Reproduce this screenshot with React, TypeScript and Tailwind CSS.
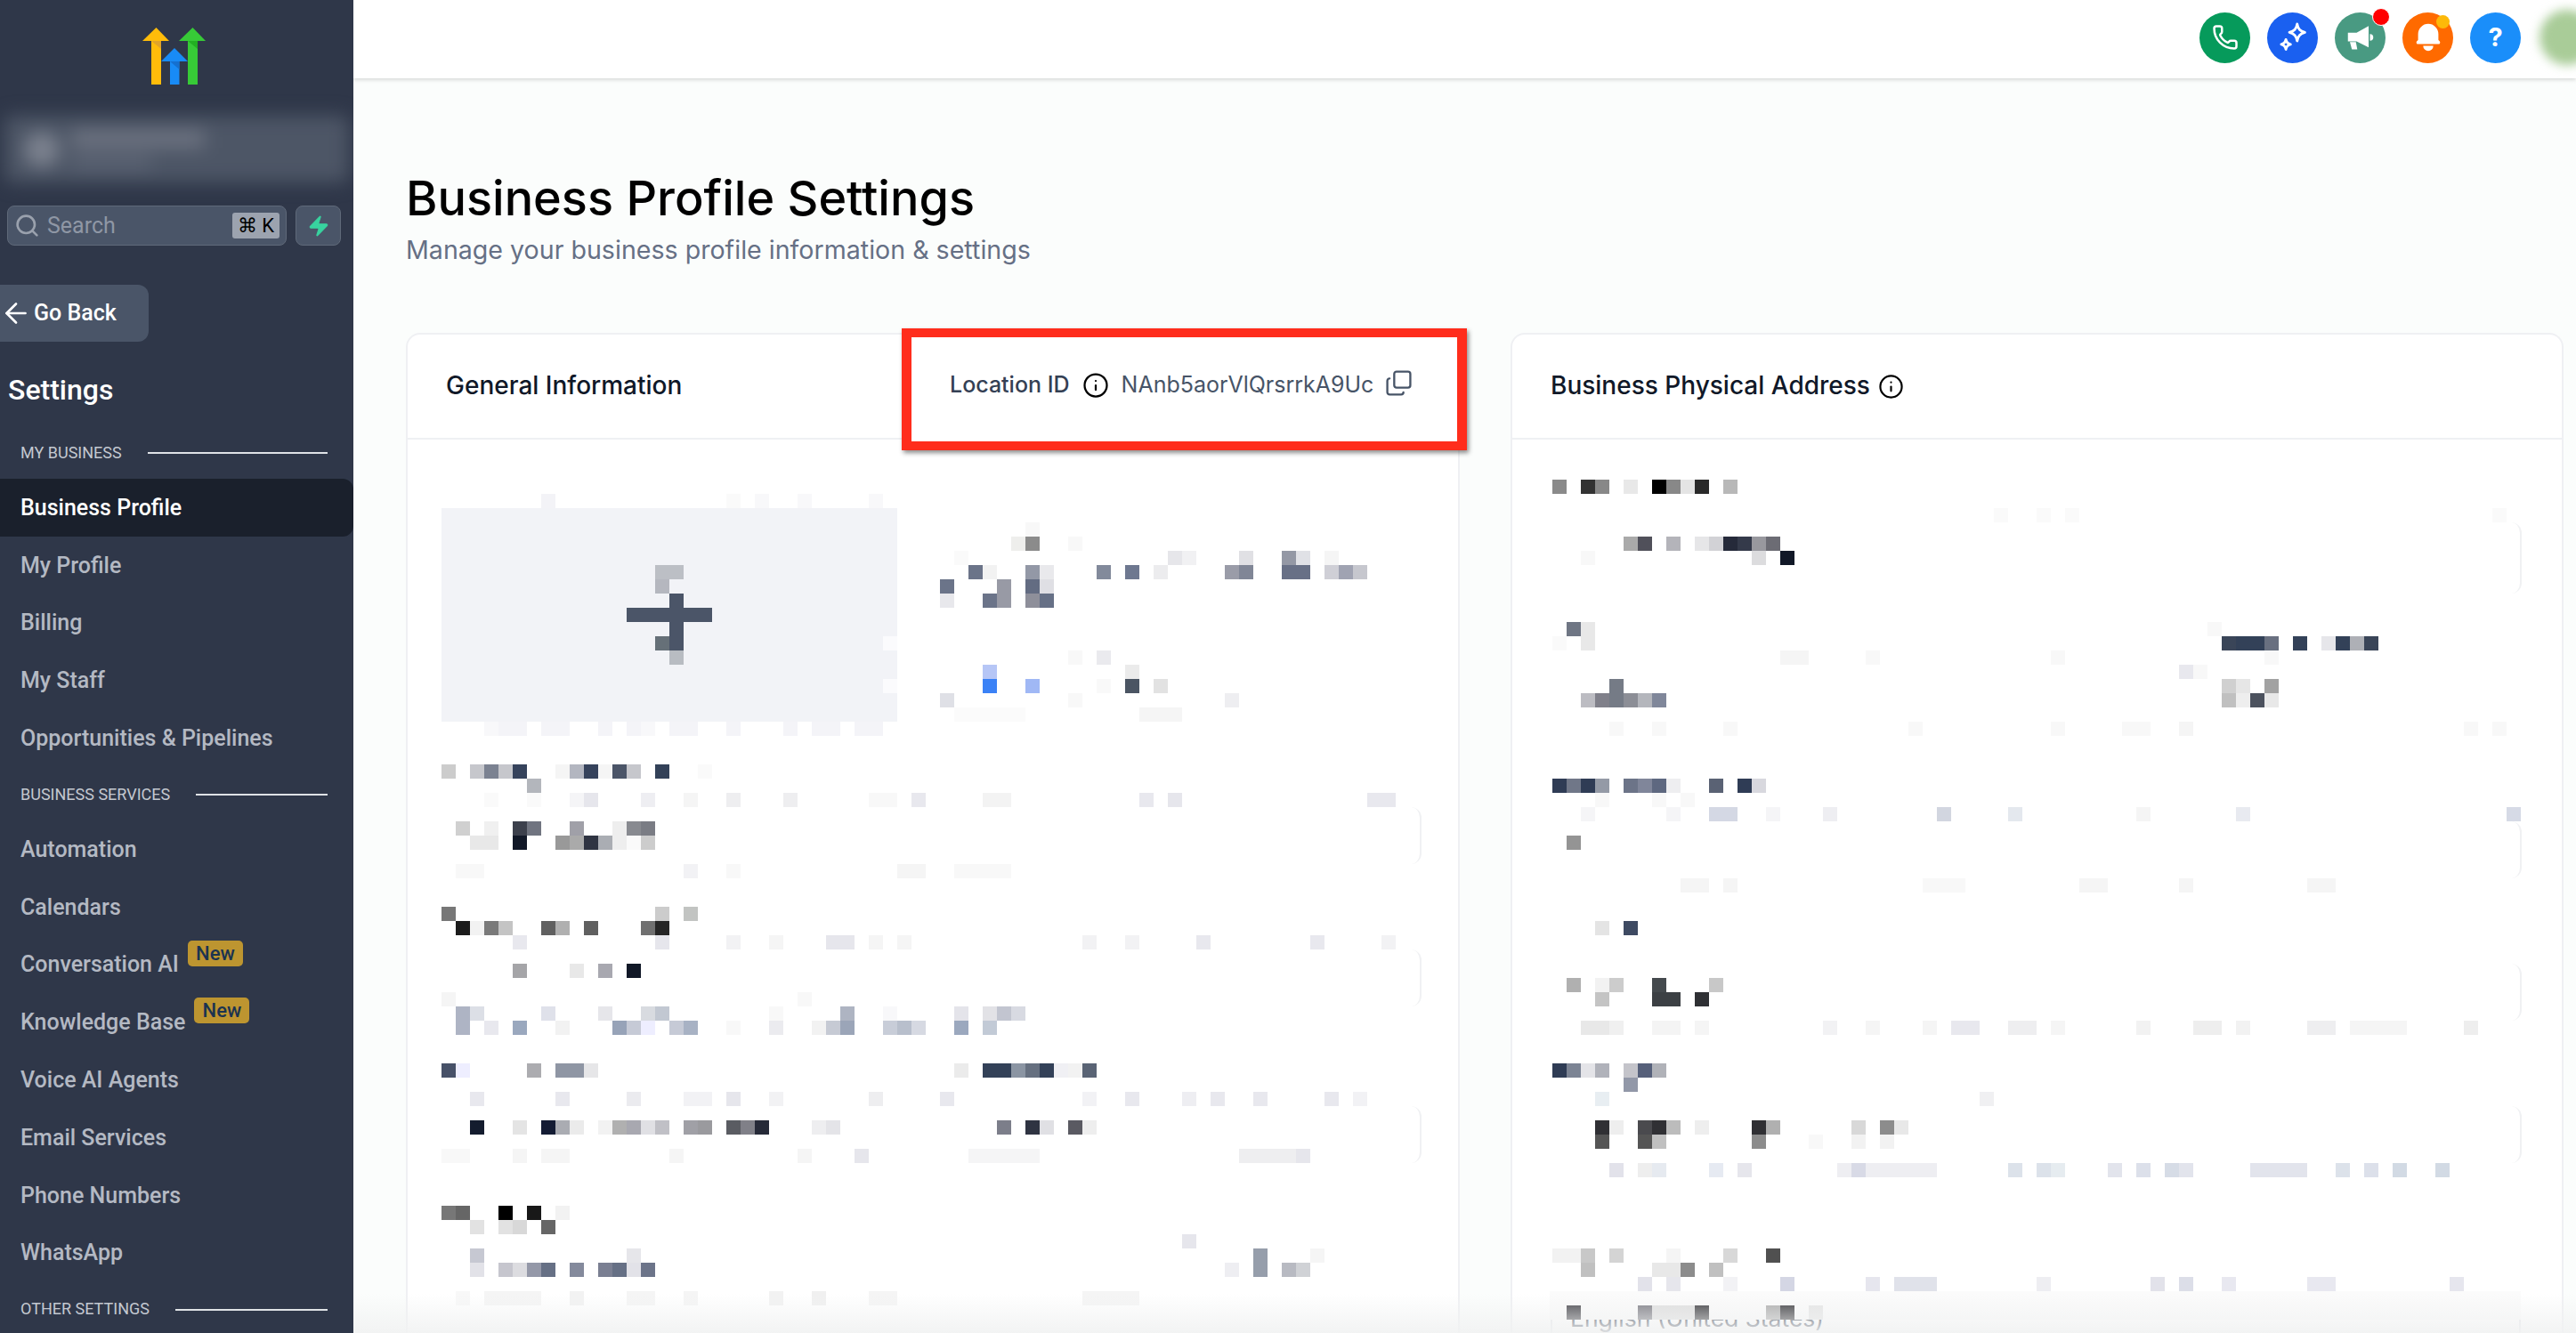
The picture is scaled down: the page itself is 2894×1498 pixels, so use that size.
import { ArrowLeft, Copy, Info, Phone, Search, Zap } from 'lucide-react';
import { HiBell } from 'react-icons/hi';

/* ── Pixelated (redacted) form content: row -> "col:colour" on a 16px grid ── */
const LEFT_CELLS: Record<number, string> = {
  3: '7:f3f3f7 20:fafafa 22:f8f8fa 25:f8f8fa 30:f8f8fa',
  5: '41:f8f8f8',
  6: '40:eeeeec 41:8b8b8b 44:f8f8f8',
  7: '36:fafafa 51:e6e6ea 52:f1f1f3 56:e0e0e4 59:9498a5 60:e0e1e6 62:f5f5f5',
  8: '15:bcbfc5 16:bcbfc5 37:6b7489 38:f2f2f2 41:9398a6 42:e9e9ec 46:828a9b 48:6e7890 50:ececee 55:9a9ca8 56:808696 59:687086 60:687086 62:cfcfd6 63:a0a3b2 64:c6c7ce',
  9: '15:b5b7bf 35:6b7489 39:989aa5 41:636c82 42:dfdfe4',
  10: '16:4b5568 35:e8e8ec 38:6b7489 39:989aa5 41:8e8f9a 42:667086',
  11: '13:4b5568 14:4b5568 15:4b5568 16:4b5568 17:4b5568 18:4b5568',
  12: '16:4b5568',
  13: '15:667078 16:4b5568 31:fbfbfd',
  14: '16:b8bcc2 44:f8f8f8 46:eaeaee',
  15: '38:b6c6f6 48:ebebeb',
  16: '31:fbfbfd 38:3b82f6 41:a0b8f5 46:f9f9f9 48:4b5563 50:e2e2e2',
  17: '35:dfe0e6 44:f8f8f8 55:eeeef1',
  18: '36:fbfbfb 37:fbfbfb 38:fbfbfb 39:fbfbfb 40:fbfbfb 49:f5f5f5 50:f5f5f5 51:f5f5f5',
  19: '3:f8f8fa 4:f4f4f8 5:f4f4f8 7:f4f4f8 8:f4f4f8 11:f4f4f8 13:f4f4f8 14:f8f8fa 16:f4f4f8 17:f4f4f8 20:f4f4f8 24:f4f4f8 26:f4f4f8 27:f4f4f8 29:f4f4f8 30:f4f4f8',
  22: '0:cccccc 2:c6c7cc 3:7b8291 4:c6c7cc 5:36435c 8:f5f5f5 9:b3b6c0 10:36435c 11:f5f5f5 12:4b5568 13:c6c7cc 15:334158 18:fafafa',
  23: '6:b3b6bc',
  24: '3:fafafa 6:fafafa 9:f5f5f7 10:e6e6ec 14:eeeef2 17:f5f5f5 20:eeeef0 24:eeeef0 30:f8f8f8 31:f8f8f8 33:e8e8ee 38:f3f3f3 39:f3f3f3 49:e8e8ee 51:e6e6ec 65:e8e8ee 66:e8e8ee',
  26: '1:d0d0d0 3:f0f0f0 5:3c404c 6:707480 9:a0a0a8 12:eeeeee 13:888a90 14:7a7c84',
  27: '2:e8e8e8 3:e8e8e8 5:111827 8:999999 9:aaaaaa 10:2f3442 11:aaadb3 12:eeeeee 13:fafafa 14:cccccc',
  29: '1:f8f8f8 2:f8f8f8 17:f2f2f5 20:f8f8f8 32:f5f5f5 33:f5f5f5 36:f8f8f8 37:f8f8f8 38:f8f8f8 39:f8f8f8',
  32: '0:777777 15:cccccc 17:c2c4c2',
  33: '1:1c1c1c 2:f2f2f2 3:7a7a7a 4:c4c4c4 7:606060 8:b0b0b0 10:606060 14:707070 15:262626',
  34: '5:e8e8ee 15:e6e6ec 20:f2f2f4 23:f5f5f5 27:e6e6ec 28:e6e6ec 30:f5f5f5 32:f5f5f5 45:f2f2f4 48:f2f2f4 53:e8e8ee 61:e8e8ee 66:f2f2f4',
  36: '5:a5a5a8 9:e8e8e8 11:a8a8b0 13:111827',
  38: '0:f5f5f5 25:f8f8f8',
  39: '1:aeb4c4 2:dcdfe6 7:dfe1ea 11:e6e6ea 14:d8dbe0 15:c2c8d2 23:f8f8f8 28:aeb4c2 31:f8f8fa 36:e4e4ea 38:e2e2e6 39:c2c5d0 40:d8dae2',
  40: '1:aeb4c4 3:e8e8ee 5:9aa8be 8:f2f2f2 12:97a3b8 13:c6cad6 14:eeeeff 16:c6cad6 17:a8b2c4 20:f8f8f8 23:ebebef 26:f2f2f2 27:c6cad4 28:9ba5b8 31:c8cdd8 32:b8bfcc 33:d6d9e2 36:9ba8be 38:c2cad6',
  43: '0:475168 1:eeeeff 6:acacb0 8:8f96a4 9:8f96a4 10:e6e6e8 36:ebebeb 38:334158 39:334158 40:8b95a3 41:667080 42:334158 43:f0f0f4 44:f2f2f2 45:5a6475',
  45: '2:e8e8ee 8:e8e8ee 13:ebebef 17:f2f2f5 18:f2f2f5 20:e6e6ec 23:f2f2f4 30:eeeef0 35:e8e8ee 45:f2f2f5 48:e8e8ee 52:eeeef2 54:e8e8ee 57:e8e8ee 62:e8e8ee 64:f2f2f5',
  47: '2:141c2e 5:e4e4e4 7:141c34 8:aaacb2 9:ebebeb 11:f2f2f2 12:b0b0b0 13:a8a8b0 14:e0e0e4 15:c0c0c6 17:a0a0a6 18:9a9a9e 20:5a5c62 21:808088 22:262a38 26:eeeef0 27:e4e4e8 39:7c7e8a 41:2f3442 42:e0e0e4 44:5a5a62 45:eeeeee',
  49: '0:f8f8f8 1:f8f8f8 5:f5f5f5 7:f5f5f5 8:f5f5f5 16:f5f5f5 25:f5f5f5 29:e6e6ec 37:f5f5f6 38:f5f5f6 39:f5f5f6 40:f5f5f6 41:f5f5f6 56:eeeef0 57:eeeef0 58:eeeef0 59:eeeef0 60:e6e6ec',
  53: '0:777777 1:666666 4:000000 6:181818 8:f2f2f2',
  54: '2:e2e2e2 4:e2e2e2 5:d8d8d8 7:666666',
  55: '52:e6e6ec',
  56: '2:c6c8d2 13:e6e6ea 57:969eab 61:f5f5f5',
  57: '2:e2e2e8 4:c6c6ce 5:dcdce0 6:9498a8 7:667085 9:848a9c 11:7a7f92 12:667085 13:e2e2e8 14:6c7489 55:eeeef2 57:969eab 59:b8bac2 60:d0d2d6',
  59: '1:f8f8f8 3:f5f5f5 4:f5f5f5 5:f5f5f5 6:f5f5f5 9:f2f2f2 13:f5f5f5 14:f5f5f5 17:f5f5f5 23:f2f2f2 26:f0f0f0 30:f5f5f5 31:f5f5f5 45:f5f5f5 46:f5f5f5 47:f5f5f5 48:f5f5f5',
};

const RIGHT_CELLS: Record<number, string> = {
  2: '0:8a8a8a 2:333333 3:888888 5:e8e8e8 7:000000 8:888888 9:e4e4e4 10:2a2a2a 12:b8b8b8',
  4: '31:fafafa 34:fafafa 36:fafafa 66:fafafa',
  6: '5:aaaaaa 6:50505a 8:b4b4ba 10:e6e6e8 11:d2d2d6 12:252a3a 13:343a4a 14:98989e 15:6c6c74',
  7: '2:f8f8f8 14:dcdcde 16:111827',
  12: '1:6f7684 2:e8e8e8 46:f8f8f8',
  13: '0:fafafa 2:e8e8e8 47:3a4558 48:334158 49:334158 50:697080 52:334158 54:e6e6ea 55:334158 56:aeb0b6 57:3a4558',
  14: '16:f5f5f5 17:f5f5f5 22:f8f8f8 35:f8f8f8 50:f8f8f8',
  15: '44:e8e8ee 45:f8f8f8',
  16: '4:757b86 47:d0d0d0 48:e6e6e6 50:a2a2a2',
  17: '2:bcbcc2 3:80808a 4:757b86 5:8c8e96 6:b4b6bc 7:80879a 47:c0c0c0 48:eeeeee 49:4c525e 50:e8e8e8',
  19: '4:f8f8f8 7:f8f8f8 12:f8f8f8 25:f8f8f8 35:f8f8f8 40:f8f8f8 41:f8f8f8 44:f5f5f5 64:f8f8f8 66:f8f8f8',
  23: '0:2f3c55 1:707788 2:2f3c55 3:949aa6 5:6c7488 6:80869a 7:5e6880 8:eeeef0 11:5a6274 13:2f3c55 14:d8d8de',
  24: '3:f8f8f8 7:f8f8f8 9:f8f8f8',
  25: '2:f5f5f7 8:f5f5f7 11:d4d8e4 12:d4d8e4 15:f5f5f7 19:eeeef2 27:d2d6e0 32:e4e8ee 41:f5f5f5 48:e8eaf0 67:d6dae6',
  27: '1:949494',
  30: '9:f5f5f5 10:f5f5f5 12:f5f5f5 26:f8f8f8 27:f8f8f8 28:f8f8f8 37:f5f5f5 38:f5f5f5 44:f5f5f5 53:f5f5f5 54:f5f5f5',
  33: '3:e4e4e4 5:3e4a62',
  37: '1:b0b0b0 3:f2f2f2 4:cccccc 7:454a4e 11:c8c8c8',
  38: '3:c4c4c4 7:3c4044 8:3c4044 10:2f3034',
  40: '2:e8e8e8 3:e8e8e8 4:f0f0f0 7:f4f4f4 8:f4f4f4 10:f5f5f5 19:f2f2f4 22:f5f5f5 26:f5f5f5 28:e8e8ee 29:e8e8ee 32:eeeef0 33:eeeef0 35:f5f5f5 41:f2f2f2 45:eeeeee 46:eeeeee 48:f2f2f2 53:eeeef0 54:eeeef0 56:f5f5f5 57:f5f5f5 58:f5f5f5 59:f5f5f5 64:eeeeee',
  43: '0:2f3c55 1:7c8494 2:e4e4e8 3:b0b2ba 5:c4c4ca 6:56607a 7:b0b2b8',
  44: '5:9298a8',
  45: '3:e8eef2 30:f0f0f2',
  47: '3:303034 4:eeeeee 6:4a4a4e 7:303034 8:bcbcbc 10:eeeeee 14:303034 15:b0b0b0 21:d8d8d8 23:8c8c8c 24:e8e8e8',
  48: '3:555555 6:555555 7:c0c0c0 14:8c8c8c 18:f8f8f8 21:f2f2f2 23:f2f2f2',
  50: '4:e2e2ea 6:eeeeee 7:e6eaf0 11:e6eaf2 13:e6e6ec 20:eeeef2 21:d8dae6 22:eeeef2 23:eeeef2 24:eeeef2 25:eeeef2 26:eeeef2 32:dce2ea 34:dce2ea 35:e6ecf0 39:e2e4ec 41:dce0ea 43:d6dce6 44:e2e4ec 49:e2e4ec 50:e2e4ec 51:e2e4ec 52:e2e4ec 55:dce2ea 57:dce0ea 59:d2dae4 62:d2dae4',
  56: '0:f2f2f2 1:f2f2f2 2:c8c8c8 4:d4d4d4 8:f5f5f5 12:d8d8d8 15:505050',
  57: '2:c0c0c0 7:e8e8e8 8:e8e8e8 9:8c8c8c 11:c0c0c0',
  58: '6:e2e2ea 8:e6e6ec 12:f2f2f5 16:d4d6e4 22:e6e6ee 24:e0e2ea 25:e0e2ea 26:e0e2ea 34:eeeef2 42:e2e2ea 44:dcdee8 47:e8e8f0 53:e8e8f0 54:e8e8f0 63:e6e6ee',
};

const RIGHT_LAST_ROW = '1:3a3a40 6:74747c 7:dddddd 8:dddddd 9:dddddd 10:303034 15:a8a8a8 16:303034 18:e4e4e4';

function parseCells(rows: Record<number, string>) {
  return Object.entries(rows).flatMap(([row, cells]) =>
    cells.split(' ').map((cell) => {
      const [col, colour] = cell.split(':');
      return { row: Number(row), col: Number(col), colour: `#${colour}` };
    }),
  );
}

function Mosaic({ rows }: { rows: Record<number, string> }) {
  return (
    <>
      {parseCells(rows).map((c) => (
        <div
          key={`${c.row}-${c.col}`}
          style={{ gridRow: c.row + 1, gridColumn: c.col + 1, backgroundColor: c.colour }}
        />
      ))}
    </>
  );
}

/* Only the right end of each blurred input survives the pixelation */
function InputEnd({ row, span, col, width }: { row: number; span: number; col: number; width: string }) {
  return (
    <div
      className={`rounded-r-xl border-r-2 border-[#f0f1f3] ${width}`}
      style={{ gridRow: `${row + 1} / span ${span}`, gridColumn: col + 1 }}
    />
  );
}

function GoLogo() {
  return (
    <svg viewBox="160 31 72 64" className="h-16 w-[72px]">
      <path d="M170 46h11v49h-11z" fill="#ffbc0a" />
      <path d="M170 46h11v9z" fill="#e0a32a" />
      <path d="M175.500 31 190 46h-30z" fill="#ffbc0a" />
      <path d="M191 69h10.500v26H191z" fill="#188bf6" />
      <path d="M191 69h10.500v9z" fill="#1570d0" />
      <path d="M196 54l15 15h-30z" fill="#188bf6" />
      <path d="M211 46h11v49h-11z" fill="#37ca37" />
      <path d="M211 46h11v9z" fill="#22b022" />
      <path d="M216.500 31 231 46h-30z" fill="#37ca37" />
    </svg>
  );
}

const MY_BUSINESS = ['My Profile', 'Billing', 'My Staff', 'Opportunities & Pipelines'];
const BUSINESS_SERVICES: { label: string; isNew?: boolean }[] = [
  { label: 'Automation' },
  { label: 'Calendars' },
  { label: 'Conversation AI', isNew: true },
  { label: 'Knowledge Base', isNew: true },
  { label: 'Voice AI Agents' },
  { label: 'Email Services' },
  { label: 'Phone Numbers' },
  { label: 'WhatsApp' },
];

function SectionLabel({ label }: { label: string }) {
  return (
    <div className="flex h-[60px] items-center gap-[29px] pl-[23px] pr-[29px]">
      <span className="whitespace-nowrap text-[18px] text-[#c3c8d0]">{label}</span>
      <div className="mt-[2px] h-[2px] flex-1 bg-[#dfe2e6]" />
    </div>
  );
}

function NavItem({ label, isNew }: { label: string; isNew?: boolean }) {
  return (
    <div className="flex h-[64.8px] items-center pl-[23px] text-[25px] font-medium text-[#b4b9c3]">
      <span>{label}</span>
      {isNew && (
        <span className="ml-[10px] flex h-[29px] w-[62px] -translate-y-[13px] items-center justify-center rounded-[5px] bg-[#bd9530] text-[22px] text-[#1b3350]">
          New
        </span>
      )}
    </div>
  );
}

function Sidebar() {
  return (
    <aside className="h-full w-[397px] shrink-0 overflow-hidden bg-[#2f3749] [font-family:Roboto,sans-serif]">
      <div className="flex justify-center pr-[5px] pt-[31px]">
        <GoLogo />
      </div>

      {/* Blurred account switcher */}
      <div className="relative mx-[5px] mt-[35px] h-[75px] rounded-lg bg-[#4d5666] blur-[10px]">
        <div className="absolute left-[22px] top-[18px] h-10 w-10 rounded-full bg-[#7b818e]" />
        <div className="absolute left-[75px] top-[16px] h-5 w-[150px] bg-[#6d7381]" />
        <div className="absolute left-[75px] top-[44px] h-4 w-[90px] bg-[#5b6373]" />
      </div>

      <div className="mt-[26px] flex gap-[10px] pl-2">
        <div className="flex h-[45px] w-[314px] items-center rounded-lg border border-[#5f6979] bg-[#4a5568] pl-[7px] pr-[7px]">
          <Search size={29} className="text-[#9aa1ad]" strokeWidth={2.2} />
          <span className="ml-[8px] flex-1 text-[25px] text-[#8f97a5]">Search</span>
          <span className="flex h-[29px] w-[53px] items-center justify-center rounded-[3px] bg-[#9ca3af] text-[22px] text-black">
            ⌘ K
          </span>
        </div>
        <div className="flex h-[45px] w-[51px] items-center justify-center rounded-lg border border-[#5f6979] bg-[#4a5568]">
          <Zap size={26} className="text-[#38d39f]" fill="#38d39f" strokeWidth={1} />
        </div>
      </div>

      <div className="mt-11 flex h-16 w-[167px] items-center gap-[2px] rounded-r-xl bg-[#4a5568] text-[25px] font-medium text-white">
        <ArrowLeft size={36} strokeWidth={1.8} />
        <span>Go Back</span>
      </div>

      <div className="mt-8 flex h-11 items-center pl-[9px] text-[32px] font-medium text-white">Settings</div>

      <div className="mt-[18px]">
        <SectionLabel label="MY BUSINESS" />
        <div className="flex h-[65px] items-center rounded-r-xl bg-[#1a202c] pl-[23px] text-[25px] font-medium text-white">
          Business Profile
        </div>
        {MY_BUSINESS.map((label) => (
          <NavItem key={label} label={label} />
        ))}
        <SectionLabel label="BUSINESS SERVICES" />
        {BUSINESS_SERVICES.map((item) => (
          <NavItem key={item.label} label={item.label} isNew={item.isNew} />
        ))}
        <SectionLabel label="OTHER SETTINGS" />
      </div>
    </aside>
  );
}

function TopBar() {
  return (
    <header className="relative z-10 flex h-[88px] shrink-0 items-center justify-end gap-[19px] bg-white pb-[4px] shadow-[0_2px_4px_rgba(0,0,0,0.14)]">
      <div className="flex h-[57px] w-[57px] items-center justify-center rounded-full bg-[#069a5b] text-white">
        <Phone size={30} strokeWidth={2} />
      </div>
      <div className="flex h-[57px] w-[57px] items-center justify-center rounded-full bg-[#1a60f0] text-white">
        <svg viewBox="0 0 24 24" className="h-[38px] w-[38px]" fill="none" stroke="currentColor" strokeWidth="1.800" strokeLinejoin="round">
          <path d="M15 2.500c.6 3.600 2 5 5.500 6-3.500 1-4.900 2.400-5.500 6-.6-3.600-2-5-5.500-6 3.500-1 4.900-2.400 5.500-6z" />
          <path d="M7 13.500c.4 2.200 1.200 3 3.300 3.500-2.100.5-2.900 1.300-3.300 3.500-.4-2.200-1.200-3-3.300-3.500 2.100-.5 2.900-1.300 3.300-3.500z" />
        </svg>
      </div>
      <div className="relative flex h-[57px] w-[57px] items-center justify-center rounded-full bg-[#499a82] text-white">
        <svg viewBox="0 0 24 24" className="h-[36px] w-[36px]" fill="currentColor">
          <path d="M2.500 8.500H9l9-5v16l-9-4.500H2.500z" />
          <path d="M4 15.500h4.500l1 5.500H5.500z" />
          <path d="M19 9.500a2.500 2.500 0 0 1 0 5z" />
        </svg>
        <span className="absolute -right-[5px] -top-[5px] h-5 w-5 rounded-full border border-white bg-[#ff0000]" />
      </div>
      <div className="relative flex h-[57px] w-[57px] items-center justify-center rounded-full bg-[#ff6a00] text-white">
        <HiBell size={38} />
        <span className="absolute right-[4px] top-[3px] h-[15px] w-[15px] rounded-full bg-[#fdb909]" />
      </div>
      <div className="flex h-[57px] w-[57px] items-center justify-center rounded-full bg-[#1a8efa] text-[29px] font-bold text-white">
        ?
      </div>
      <div className="-mr-[21px] ml-[2px] h-[62px] w-[62px] rounded-full bg-[#a9cc98] blur-[6px]" />
    </header>
  );
}

function CardHeader({ title, children }: { title: string; children?: React.ReactNode }) {
  return (
    <div className="flex h-[118px] shrink-0 items-center border-b-2 border-[#eff0f3] pl-[43px] text-[28px] font-medium text-[#101828]">
      <span className="-mt-[2px]">{title}</span>
      {children}
    </div>
  );
}

function GeneralCard() {
  return (
    <section className="flex min-w-0 flex-col rounded-t-2xl border-2 border-b-0 border-[#eff0f3] bg-white">
      <CardHeader title="General Information" />
      <div className="grid grid-cols-[repeat(71,16px)] auto-rows-[16px] pl-[38px] pt-[13px]">
        <div className="bg-[#f2f3f7] [grid-column:1/span_32] [grid-row:5/span_15]" />
        <InputEnd row={25} span={4} col={68} width="w-[13px]" />
        <InputEnd row={35} span={4} col={68} width="w-[13px]" />
        <InputEnd row={46} span={4} col={68} width="w-[13px]" />
        <Mosaic rows={LEFT_CELLS} />
      </div>
    </section>
  );
}

function AddressCard() {
  return (
    <section className="flex min-w-0 flex-col rounded-t-2xl border-2 border-b-0 border-[#eff0f3] bg-white">
      <CardHeader title="Business Physical Address">
        <Info size={29} className="ml-[9px] text-black" strokeWidth={1.8} />
      </CardHeader>
      <div className="grid grid-cols-[repeat(71,16px)] auto-rows-[16px] pl-[45px] pt-[13px]">
        <InputEnd row={5} span={5} col={67} width="w-[17px]" />
        <InputEnd row={26} span={4} col={67} width="w-[17px]" />
        <InputEnd row={36} span={4} col={67} width="w-[17px]" />
        <InputEnd row={46} span={4} col={67} width="w-[17px]" />
        <Mosaic rows={RIGHT_CELLS} />

        {/* Language select: the only text the redaction left readable */}
        <div className="-ml-[2px] flex items-center rounded-lg border-2 border-[#e5e7eb] pb-[4px] pl-5 text-[26.500px] leading-none text-[#374151] [grid-column:1/span_68] [grid-row:60/span_4]">
          English (United States)
        </div>
        <div className="-ml-[3px] bg-[#fbfbfb] [grid-column:1/span_68] [grid-row:60/span_2]" />
        <Mosaic rows={{ 60: RIGHT_LAST_ROW }} />
      </div>
    </section>
  );
}

export default function App() {
  return (
    <div className="flex h-[1498px] w-[2894px] overflow-hidden bg-[#fbfdfc] [font-family:Inter,sans-serif]">
      <Sidebar />
      <main className="relative flex h-full min-w-0 flex-1 flex-col overflow-hidden">
        <TopBar />

        <div className="pl-[59px] pr-[14px] pt-[105px]">
          <h1 className="text-[54px] font-medium leading-[60px] text-black">Business Profile Settings</h1>
          <p className="mt-[10px] text-[28.600px] leading-[36px] text-[#667085]">
            Manage your business profile information &amp; settings
          </p>
          <div className="mt-[75px] grid grid-cols-[1184px_1183px] gap-[57px]">
            <GeneralCard />
            <AddressCard />
          </div>
        </div>

        {/* Annotation drawn on the screenshot */}
        <div className="absolute left-[616px] top-[369px] flex h-[137px] w-[635px] items-start border-x-[11px] border-y-[10px] border-[#ff2d1c] bg-white pl-[43px] pt-[39px] shadow-[2px_3px_5px_rgba(0,0,0,0.45)]">
          <span className="text-[25px] font-medium leading-[28px] text-[#344054]">Location ID</span>
          <Info size={30} className="ml-[14px] text-black" strokeWidth={1.8} />
          <span className="ml-[14px] text-[25px] leading-[28px] text-[#475467]">NAnb5aorVlQrsrrkA9Uc</span>
          <Copy size={31} className="ml-[13px] -mt-[3px] -scale-y-100 text-[#475467]" strokeWidth={1.800} />
        </div>

        {/* Scroll fade along the bottom edge */}
        <div className="pointer-events-none absolute inset-x-0 bottom-0 h-[44px] bg-gradient-to-b from-transparent to-[#f1f2f2]/90" />
      </main>
    </div>
  );
}
